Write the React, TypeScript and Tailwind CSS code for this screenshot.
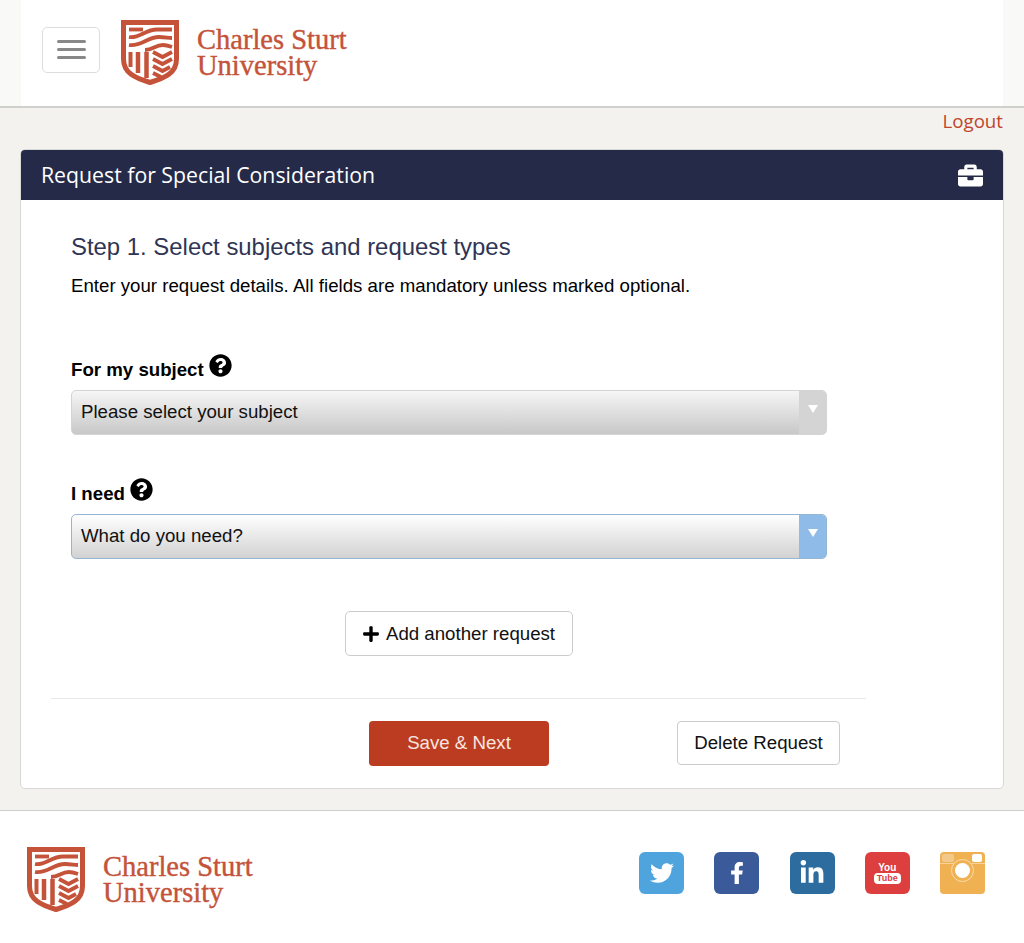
import { FaBriefcase, FaFacebookF, FaLinkedinIn, FaPlus, FaQuestionCircle, FaTwitter } from 'react-icons/fa';

function Shield() {
  return (
    <svg width="58" height="65" viewBox="0 0 58 65" fill="none" stroke="#c4533a" className="shrink-0">
      <path d="M2.500 2.500H55.500V39C55.500 53 44 58 29 62.500C14 58 2.500 53 2.500 39Z" strokeWidth="5" />
      <g strokeWidth="3.800">
        <path d="M8 9.500H22" />
        <path d="M8 17C18 19 24 9.500 36 9.500H51" />
        <path d="M8 25C20 27 26 17 38 17C44 17 47 18 51 18" />
        <path d="M24 30C32 30 34 25 42 25C45 25 48 26 51 27" />
        <path d="M32 32L41.500 37L51 32M32 39L41.500 44L51 39M32 46L41.500 51L49 47M32 53L40 57" />
      </g>
      <path d="M9.500 32V47" strokeWidth="4" />
      <path d="M17 32V53" strokeWidth="4.500" />
      <path d="M25.500 32V58" strokeWidth="4.500" />
    </svg>
  );
}

function Logo() {
  return (
    <div className="flex items-center gap-[18px]">
      <Shield />
      <div className="pt-[1px] font-['Liberation_Serif',serif] text-[28.500px] leading-[26px] text-[#c4533a] [-webkit-text-stroke:0.4px_#c4533a]">
        <p>Charles Sturt</p>
        <p>University</p>
      </div>
    </div>
  );
}

function FakeSelect({ text, focused }: { text: string; focused?: boolean }) {
  return (
    <div
      className={`flex h-[45px] w-[756px] items-stretch overflow-hidden rounded-[5px] border ${
        focused
          ? 'border-[#94b6d4] bg-linear-to-b from-white to-[#d2d2d2]'
          : 'border-[#d4d4d4] bg-linear-to-b from-[#f6f6f6] to-[#c8c8c8]'
      }`}
    >
      <span className="flex-1 self-center pb-[2px] pl-[9px] text-[18.660px] text-[#111]">{text}</span>
      <span className={`flex w-[27px] justify-center pt-[14px] ${focused ? 'bg-[#8fbbe9]' : 'bg-[#d4d4d4]'}`}>
        <span className="h-0 w-0 border-x-[5px] border-t-[8px] border-x-transparent border-t-white" />
      </span>
    </div>
  );
}

function Label({ text }: { text: string }) {
  return (
    <div className="flex h-[25px] items-center gap-[5px] text-[18.660px] font-bold text-black">
      <span>{text}</span>
      <FaQuestionCircle className="mb-[9px] text-[23px]" />
    </div>
  );
}

function SocialBox({ color, children }: { color: string; children: React.ReactNode }) {
  return (
    <div className={`flex h-[42px] w-[45px] items-center justify-center overflow-hidden rounded-[6px] text-white ${color}`}>
      {children}
    </div>
  );
}

export default function App() {
  return (
    <div className="flex min-h-[943px] flex-col bg-[#f3f2ee] font-['Liberation_Sans',sans-serif]">
      {/* Top bar */}
      <header className="h-[108px] border-b-2 border-[#cfcfcb] bg-[#f9f9f7] px-[21px]">
        <div className="flex h-full items-center bg-white pb-[2px] pl-[21px]">
          <div className="mb-[5px] flex h-[46px] w-[58px] flex-col items-center justify-center gap-[5px] rounded-[5px] border border-[#ddd]">
            <span className="h-[3px] w-[29px] rounded-sm bg-[#888]" />
            <span className="h-[3px] w-[29px] rounded-sm bg-[#888]" />
            <span className="h-[3px] w-[29px] rounded-sm bg-[#888]" />
          </div>
          <div className="ml-[21px]">
            <Logo />
          </div>
        </div>
      </header>

      <div className="flex h-[41px] items-center justify-end pr-[21px] pb-[15px] font-['Open_Sans',sans-serif] text-[18.700px] text-[#c0452c]">
        Logout
      </div>

      {/* Request card */}
      <main className="mx-[20px] h-[640px] overflow-hidden rounded-[5px] border border-[#d8d8d6] bg-white">
        <div className="flex h-[50px] items-center justify-between bg-[#242a48] pr-[20px] pl-[20px] font-['Open_Sans',sans-serif] text-[21.250px] text-white">
          <span>Request for Special Consideration</span>
          <FaBriefcase className="text-[25px]" />
        </div>

        <div className="pt-[33px] pl-[50px]">
          <h1 className="text-[23.900px] leading-[28px] text-[#2f3555]">Step 1. Select subjects and request types</h1>
          <p className="mt-[13px] text-[18.660px] leading-[24px] text-black">
            Enter your request details. All fields are mandatory unless marked optional.
          </p>

          <div className="mt-[59px]">
            <Label text="For my subject" />
            <div className="mt-[8px]">
              <FakeSelect text="Please select your subject" />
            </div>
          </div>

          <div className="mt-[46px]">
            <Label text="I need" />
            <div className="mt-[8px]">
              <FakeSelect text="What do you need?" focused />
            </div>
          </div>
        </div>

        <div className="ml-[30px] w-[815px]">
          <div className="mt-[52px] flex justify-center">
            <button className="flex h-[45px] w-[228px] items-center justify-center gap-[6px] rounded-[5px] border border-[#ccc] text-[18.660px] text-[#111]">
              <FaPlus className="text-[18px] text-black" />
              Add another request
            </button>
          </div>
          <div className="mt-[42px] border-t border-[#e8e8e6]" />
          <div className="mt-[22px] flex items-start">
            <button className="ml-[318px] h-[45px] w-[180px] rounded-[4px] bg-[#bb3c20] pb-[2px] text-[18.660px] text-[#f7e6e0]">
              Save &amp; Next
            </button>
            <button className="ml-[128px] h-[44px] w-[163px] rounded-[4px] border border-[#ccc] text-[18.660px] text-[#111]">
              Delete Request
            </button>
          </div>
        </div>
      </main>

      {/* Footer */}
      <footer className="mt-[21px] flex h-[133px] items-start justify-between border-t border-[#cfcfcb] bg-white pt-[36px] pr-[39px] pl-[27px]">
        <Logo />
        <div className="flex gap-[30.250px] pt-[5px]">
          <SocialBox color="bg-[#4fa4dd]">
            <FaTwitter className="text-[24px]" />
          </SocialBox>
          <SocialBox color="bg-[#3b5a9a]">
            <FaFacebookF className="text-[22px]" />
          </SocialBox>
          <SocialBox color="bg-[#2c6c9e]">
            <FaLinkedinIn className="text-[26px]" />
          </SocialBox>
          <SocialBox color="bg-[#dc3f3e]">
            <div className="flex flex-col items-center leading-none font-['Liberation_Sans_Narrow','Liberation_Sans',sans-serif] font-bold">
              <span className="text-[10px] leading-[11px]">You</span>
              <span className="rounded-[4px] bg-white px-[3px] text-[9px] leading-[11px] text-[#dc3f3e]">Tube</span>
            </div>
          </SocialBox>
          <div className="relative h-[42px] w-[45px] overflow-hidden rounded-[4px] bg-[#efb152]">
            <div className="absolute inset-x-0 top-[11px] h-px bg-[#f6d29c]" />
            <div className="absolute top-[2px] left-[2px] h-[8px] w-[12px] rounded-[2px] bg-[#f3c98b]" />
            <div className="absolute top-[2px] right-[3px] h-[8px] w-[10px] rounded-[2px] bg-white" />
            <div className="absolute top-[7px] left-[11px] flex h-[23px] w-[23px] items-center justify-center rounded-full border border-[#f9dcae] bg-[#efb152]">
              <div className="h-[15px] w-[15px] rounded-full bg-white" />
            </div>
          </div>
        </div>
      </footer>
    </div>
  );
}
